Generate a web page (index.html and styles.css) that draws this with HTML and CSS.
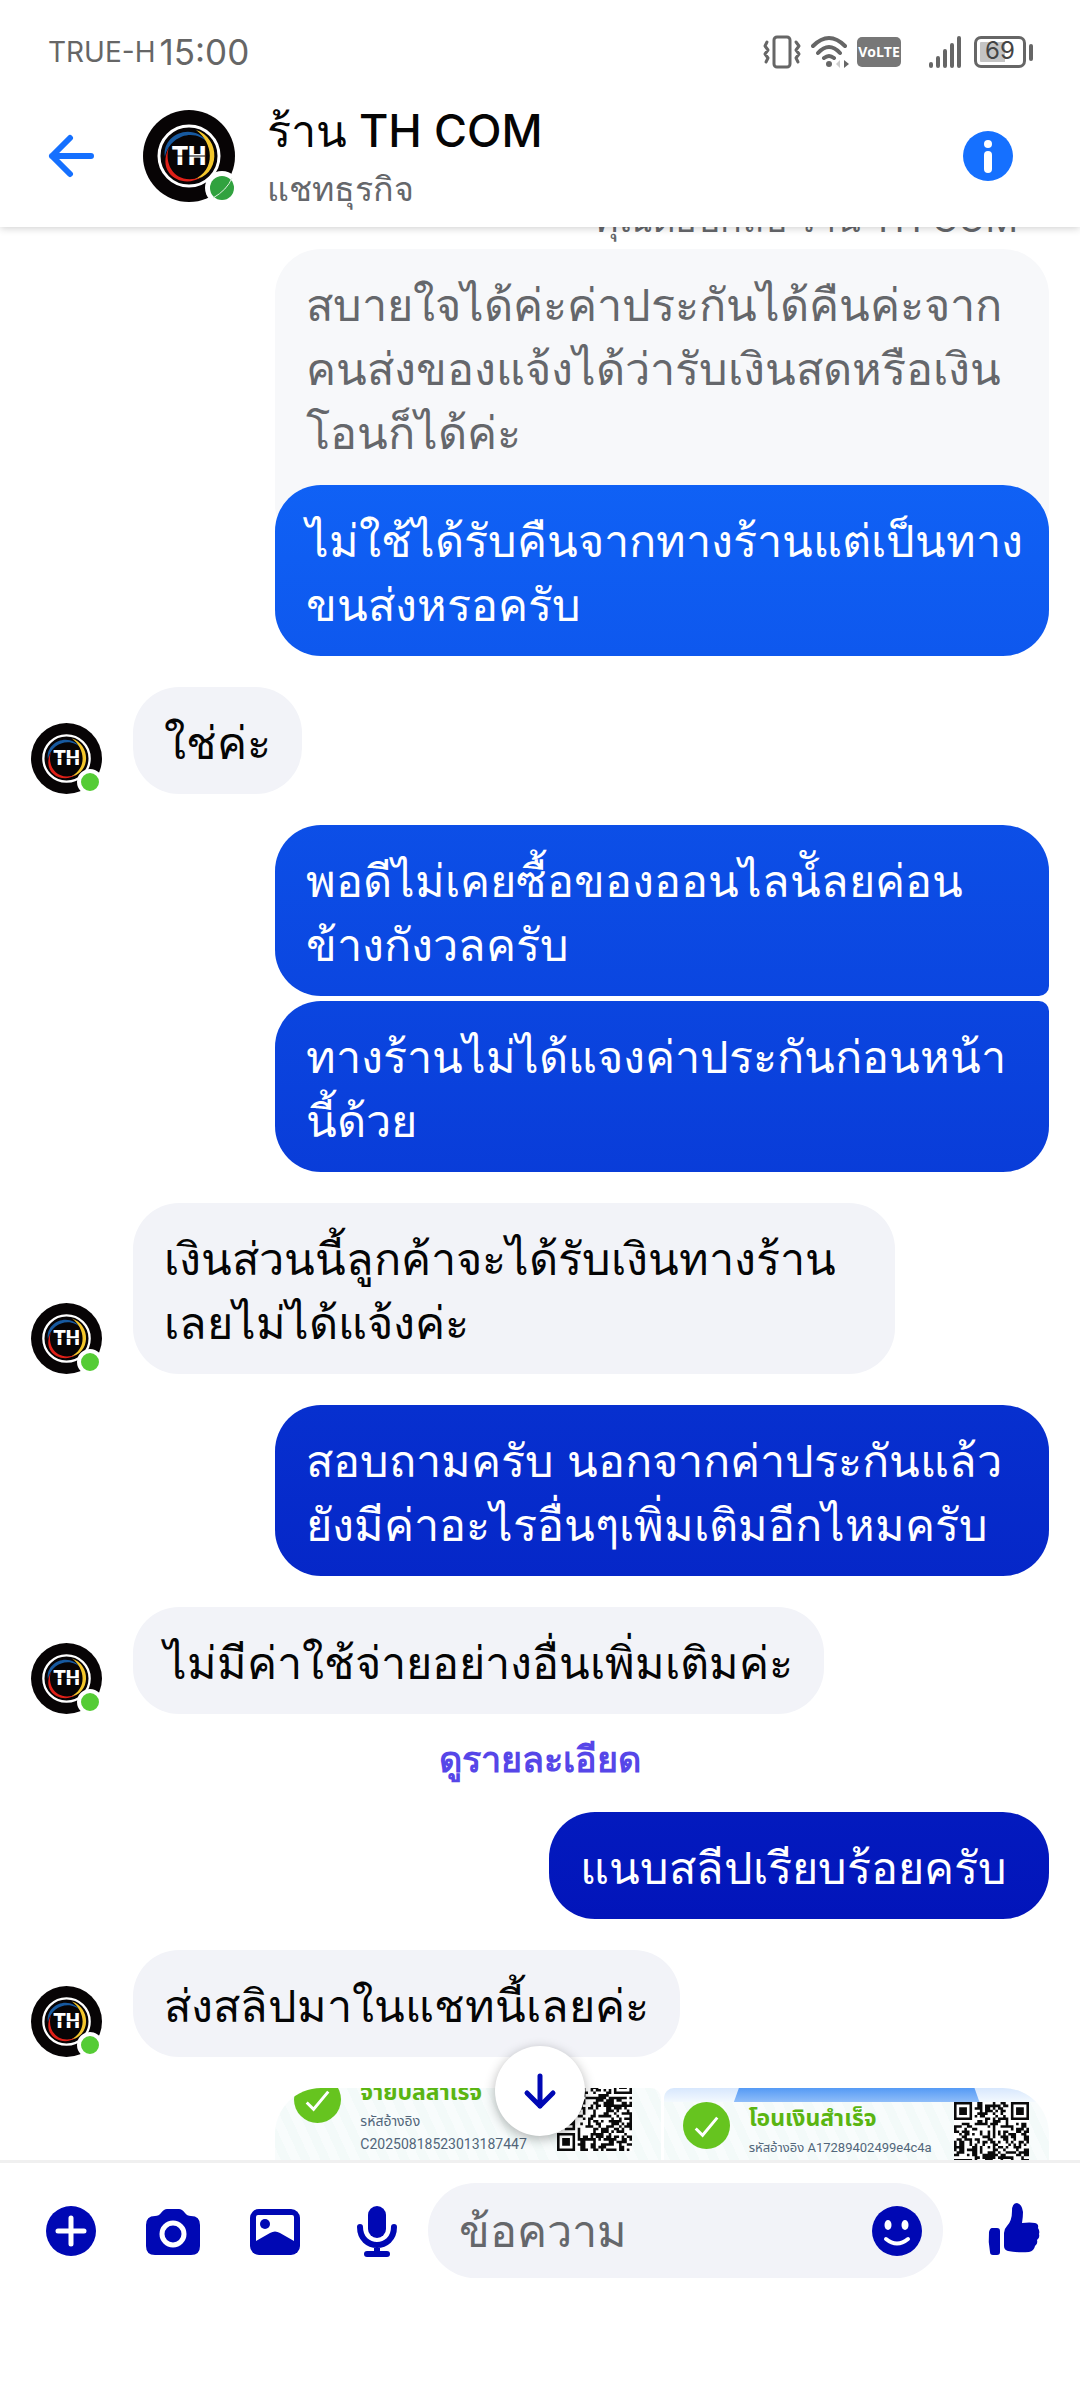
FILE: index.html
```html
<!DOCTYPE html>
<html lang="th">
<head>
<meta charset="utf-8">
<meta name="viewport" content="width=device-width, initial-scale=1">
<title>ร้าน TH COM</title>
<link rel="stylesheet" href="styles.css">
</head>
<body>
<svg class="defs" aria-hidden="true">
  <symbol id="logo" viewBox="0 0 92 92">
    <circle cx="46" cy="46" r="46" fill="#070405"/>
    <circle cx="46" cy="46" r="30" fill="none" stroke="#fff" stroke-width="3"/>
    <path d="M22 47C18 25 50 10 66 34C52 17 26 26 22 47Z" fill="#17599f"/>
    <path d="M53 20C78 28 78 66 50 70C74 60 70 32 53 20Z" fill="#f3c62c"/>
    <path d="M26 37C20 56 34 76 58 67C42 79 12 66 26 37Z" fill="#df2018"/>
    <text class="logo-text" x="46" y="55" text-anchor="middle">TH</text>
    <path d="M30 46h32" stroke="#070405" stroke-width="1"/>
  </symbol>
  <symbol id="tick" viewBox="0 0 48 48">
    <circle cx="24" cy="24" r="24" fill="#66c41f"/>
    <path d="M13 27l7 7L35 16" fill="none" stroke="#fff" stroke-width="3"/>
  </symbol>
</svg>

<header class="top">
  <div class="status">
    <span class="carrier">TRUE-H</span>
    <span class="clock">15:00</span>
    <svg class="st-vibrate" width="38" height="34" viewBox="0 0 38 34" fill="none" stroke="#666" stroke-width="3" stroke-linecap="round" stroke-linejoin="round"><rect x="11" y="2" width="16" height="30" rx="3"/><path d="M4 7L2 11l3 4-3 4 3 4-2 4M33 7l3 4-3 4 3 4-3 4 2 4"/></svg>
    <svg class="st-wifi" width="38" height="34" viewBox="0 0 38 34" fill="none" stroke="#666" stroke-width="4" stroke-linecap="round"><path d="M2 11Q18-5 34 11M7 18Q18 6 29 18M13 23Q18 19 23 23"/><circle cx="18" cy="29" r="3" fill="#666" stroke="none"/><path d="M29 25l-4 4 4 4z" fill="#ccc" stroke="none"/><path d="M33 25l5 4-5 4z" fill="#666" stroke="none"/></svg>
    <span class="volte">VoLTE</span>
    <svg class="st-signal" width="34" height="32" viewBox="0 0 34 32" stroke="#666" stroke-width="4" stroke-linecap="round"><path d="M3 28v2M10 22v8M17 15v15M24 9v21M31 2v28"/></svg>
    <span class="battery">69</span>
  </div>
  <div class="bar">
    <button class="icon back" aria-label="กลับ"><svg width="46" height="46" viewBox="0 0 46 46" fill="none" stroke="#1570ff" stroke-width="6" stroke-linecap="round" stroke-linejoin="round"><path d="M43 23H4M22 5L4 23l18 18"/></svg></button>
    <span class="avatar avatar-lg"><svg width="92" height="92"><use href="#logo"/></svg>
      <svg class="presence-lg" width="34" height="34" viewBox="0 0 34 34"><circle cx="17" cy="17" r="17" fill="#fff"/><circle cx="17" cy="17" r="12" fill="#31a23f"/><path d="M8 27Q22 19 27 7" fill="none" stroke="#dff0e0" stroke-width="1"/></svg>
    </span>
    <div class="who"><h1>ร้าน TH COM</h1><p>แชทธุรกิจ</p></div>
    <button class="icon" aria-label="ข้อมูล"><svg width="52" height="52" viewBox="0 0 52 52"><circle cx="26" cy="26" r="25" fill="#1570ff"/><circle cx="26" cy="14" r="4" fill="#fff"/><path d="M26 25v14" stroke="#fff" stroke-width="8" stroke-linecap="round"/></svg></button>
  </div>
</header>

<div class="pane">
<main class="chat">
  <p class="reply-label">คุณตอบกลับ ร้าน TH COM</p>
  <div class="bubble quote">สบายใจได้ค่ะค่าประกันได้คืนค่ะจาก<br>คนส่งของแจ้งได้ว่ารับเงินสดหรือเงิน<br>โอนก็ได้ค่ะ</div>
  <div class="bubble out wide reply">ไม่ใช้ได้รับคืนจากทางร้านแต่เป็นทาง<br>ขนส่งหรอครับ</div>

  <div class="in"><span class="avatar"><svg width="71" height="71"><use href="#logo"/></svg><i class="presence"></i></span><div class="bubble">ใช่ค่ะ</div></div>

  <div class="group">
    <div class="bubble out wide first">พอดีไม่เคยซื้อของออนไลน์ัลยค่อน<br>ข้างกังวลครับ</div>
    <div class="bubble out wide last">ทางร้านไม่ได้แจงค่าประกันก่อนหน้า<br>นี้ด้วย</div>
  </div>

  <div class="in"><span class="avatar"><svg width="71" height="71"><use href="#logo"/></svg><i class="presence"></i></span><div class="bubble wide-in">เงินส่วนนี้ลูกค้าจะได้รับเงินทางร้าน<br>เลยไม่ได้แจ้งค่ะ</div></div>

  <div class="bubble out wide">สอบถามครับ นอกจากค่าประกันแล้ว<br>ยังมีค่าอะไรอื่นๆเพิ่มเติมอีกไหมครับ</div>

  <div class="in"><span class="avatar"><svg width="71" height="71"><use href="#logo"/></svg><i class="presence"></i></span><div class="bubble">ไม่มีค่าใช้จ่ายอย่างอื่นเพิ่มเติมค่ะ</div></div>

  <a class="details" href="#">ดูรายละเอียด</a>

  <div class="bubble out short">แนบสลีปเรียบร้อยครับ</div>

  <div class="in"><span class="avatar"><svg width="71" height="71"><use href="#logo"/></svg><i class="presence"></i></span><div class="bubble">ส่งสลิปมาในแชทนี้เลยค่ะ</div></div>

  <div class="slips">
    <section class="slip slip-bill">
      <div class="slip-row">
        <svg width="47" height="47"><use href="#tick"/></svg>
        <div class="slip-text"><h2>จ่ายบิลสำเร็จ</h2><p>รหัสอ้างอิง</p><p>C20250818523013187447</p></div>
        <svg class="qr" width="75" height="75" viewBox="0 0 29 29" data-seed="7"></svg>
      </div>
    </section>
    <section class="slip slip-transfer">
      <svg class="ribbon" height="14" viewBox="0 0 386 14" preserveAspectRatio="none"><defs><linearGradient id="sky" x1="0" y1="0" x2="0" y2="1"><stop offset="0" stop-color="#559af5"/><stop offset="1" stop-color="#8fbdf9"/></linearGradient></defs><path d="M75 0H311L316 14H70Z" fill="url(#sky)"/></svg>
      <div class="slip-row">
        <svg width="47" height="47"><use href="#tick"/></svg>
        <div class="slip-text"><h2>โอนเงินสำเร็จ</h2><p>รหัสอ้างอิง A17289402499e4c4a</p></div>
        <svg class="qr" width="75" height="75" viewBox="0 0 29 29" data-seed="23"></svg>
      </div>
    </section>
  </div>
</main>
<button class="icon jump" aria-label="เลื่อนลง"><svg width="36" height="40" viewBox="0 0 36 40" fill="none" stroke="#0008b4" stroke-width="5" stroke-linecap="round" stroke-linejoin="round"><path d="M18 5v30M5 22l13 13 13-13"/></svg></button>
</div>

<form class="composer">
  <div class="tools">
    <button type="button" class="icon" aria-label="เพิ่ม"><svg width="56" height="56" viewBox="0 0 56 56"><circle cx="28" cy="28" r="25" fill="#0008b4"/><path d="M28 15v26M15 28h26" stroke="#fff" stroke-width="5" stroke-linecap="round"/></svg></button>
    <button type="button" class="icon" aria-label="กล้อง"><svg width="56" height="56" viewBox="0 0 56 56"><path d="M10 13Q14 13 16 10Q19 6 22 6H34Q37 6 40 10Q42 13 46 13Q55 13 55 22V43Q55 52 46 52H10Q1 52 1 43V22Q1 13 10 13Z" fill="#0008b4"/><circle cx="28" cy="31" r="11" fill="none" stroke="#fff" stroke-width="5"/></svg></button>
    <button type="button" class="icon" aria-label="รูปภาพ"><svg width="56" height="56" viewBox="0 0 56 56"><rect x="3" y="6" width="50" height="46" rx="9" fill="#0008b4"/><path d="M9 14Q9 12 11 12H45Q47 12 47 14V38L33 30Q28 27 23 30L9 38Z" fill="#fff"/><circle cx="18" cy="21" r="5" fill="#0008b4"/></svg></button>
    <button type="button" class="icon" aria-label="ไมโครโฟน"><svg width="56" height="56" viewBox="0 0 56 56"><rect x="19" y="3" width="18" height="32" rx="9" fill="#0008b4"/><path d="M11 24C11 48 45 48 45 24M28 42v8" fill="none" stroke="#0008b4" stroke-width="6" stroke-linecap="round"/><rect x="15" y="48" width="26" height="6" rx="3" fill="#0008b4"/></svg></button>
  </div>
  <div class="field">
    <input type="text" placeholder="ข้อความ" aria-label="ข้อความ">
    <button type="button" class="icon" aria-label="อีโมจิ"><svg width="52" height="52" viewBox="0 0 52 52"><circle cx="26" cy="26" r="25" fill="#0008b4"/><ellipse cx="17" cy="20" rx="3.5" ry="5" fill="#fff"/><ellipse cx="34" cy="20" rx="3.5" ry="5" fill="#fff"/><path d="M15 34Q26 43 37 34" fill="none" stroke="#fff" stroke-width="4" stroke-linecap="round"/></svg></button>
  </div>
  <button type="button" class="icon" aria-label="ถูกใจ"><svg width="56" height="56" viewBox="0 0 56 56" fill="#0008b4"><path d="M6 25H11Q14 25 14 28V49Q14 52 11 52H7Q4 52 4 49Q2 39 3 29Q4 25 6 25Z"/><path d="M18 30Q18 26 21 23Q26 18 26 8Q26 0 31 0Q36 1 37 9Q37 14 36 20Q44 19 49 20Q53 21 52 25Q54 28 53 31Q54 35 51 37Q52 41 49 43Q48 48 43 49Q32 50 22 48Q18 47 18 43Z"/></svg></button>
</form>
<script src="script.js"></script>
</body>
</html>
```
FILE: styles.css
```css
* { box-sizing: border-box; margin: 0; }

body {
  height: 100vh;
  display: flex;
  flex-direction: column;
  background: #fff;
  color: #050505;
  font-family: Inter, "Noto Sans", sans-serif;
  font-size: 45px;
}

.defs { position: absolute; width: 0; height: 0; }

.icon {
  flex: none;
  padding: 0;
  border: 0;
  background: none;
  display: flex;
  align-items: center;
  justify-content: center;
}

/* Header */
.top {
  position: relative;
  z-index: 1;
  height: 227px;
  background: #fff;
  box-shadow: 0 1px 8px rgba(0, 0, 0, 0.2);
}

.status {
  display: flex;
  align-items: center;
  height: 84px;
  padding: 20px 46px 0 48px;
  color: #666;
  line-height: 40px;
}
.carrier { font-size: 28px; margin-right: 4px; }
.clock { font-size: 35px; margin-right: auto; }
.st-vibrate { margin-right: 10px; }
.st-wifi { margin-right: 8px; }
.st-signal { margin-right: 12px; }
.volte {
  width: 44px;
  height: 30px;
  margin-right: 27px;
  border-radius: 5px;
  background: #777;
  color: #fff;
  font: bold 14px/30px "Open Sans", sans-serif;
  text-align: center;
}
.battery {
  position: relative;
  width: 52px;
  height: 32px;
  margin-right: 8px;
  border: 3px solid #666;
  border-radius: 7px;
  background: linear-gradient(90deg, #c4c4c4 60%, #fff 60%);
  box-shadow: inset 0 0 0 3px #fff;
  color: #444;
  font-size: 24px;
  line-height: 24px;
  text-align: center;
}
.battery::after {
  content: "";
  position: absolute;
  left: 52px;
  top: 5px;
  width: 4px;
  height: 17px;
  border-radius: 2px;
  background: #666;
}

.bar {
  display: flex;
  align-items: center;
  height: 143px;
  padding: 0 66px 0 48px;
}
.back { margin-right: 49px; }
.who { flex: 1; margin-left: 32px; padding-top: 4px; display: grid; gap: 6px; }
.who h1 { font-size: 45px; font-weight: 500; line-height: 56px; }
.who p { font-size: 34px; line-height: 48px; color: #65676b; }

.avatar { position: relative; flex: none; width: 71px; height: 71px; }
.avatar svg { display: block; }
.avatar-lg { width: 92px; height: 92px; }
.avatar .presence-lg { position: absolute; right: -4px; bottom: -3px; }
.presence {
  position: absolute;
  right: -1px;
  bottom: -1px;
  width: 26px;
  height: 26px;
  border: 4px solid #fff;
  border-radius: 50%;
  background: #55cc35;
}
.logo-text { font: 900 26px Roboto, sans-serif; fill: #fff; }

/* Conversation */
.pane { position: relative; flex: 1; min-height: 0; }
.chat {
  height: 100%;
  overflow: hidden;
  padding: 0 31px;
  display: flex;
  flex-direction: column;
  align-items: flex-end;
  gap: 31px;
}
.chat > * { flex: none; }
.reply-label {
  margin: -26px 31px -19px 0;
  font-size: 36px;
  line-height: 36px;
  color: #65676b;
}
.bubble {
  padding: 24px 31px 19px;
  border-radius: 46px;
  background: #f2f3f8;
  line-height: 64px;
  white-space: nowrap;
}
.quote {
  width: 76%;
  margin-bottom: -97px;
  padding-bottom: 86px;
  background: #f7f8fa;
  color: #65676b;
}
.out {
  color: #fff;
  background: linear-gradient(#126eff 10%, #0008b0 90%) fixed;
}
.wide { width: 76%; }
.wide-in { width: 762px; }
.short { min-width: 500px; }
.group {
  align-self: stretch;
  display: flex;
  flex-direction: column;
  align-items: flex-end;
  gap: 5px;
}
.first { border-bottom-right-radius: 10px; }
.last { border-top-right-radius: 10px; }
.in {
  align-self: flex-start;
  display: flex;
  align-items: flex-end;
  gap: 31px;
}
.details {
  align-self: center;
  padding-bottom: 8px;
  color: #5646e8;
  font-size: 36px;
  font-weight: bold;
  line-height: 28px;
  text-decoration: none;
}

.slips {
  width: 76%;
  height: 400px;
  display: grid;
  grid-template-columns: 1fr 1fr;
  gap: 3px;
}
.slip {
  position: relative;
  min-width: 0;
  overflow: hidden;
  background: repeating-linear-gradient(65deg, #f3faf9 0 9px, #f8fcfc 9px 18px);
}
.slip-bill { border-radius: 46px 10px 10px 46px; }
.slip-transfer { border-radius: 10px 46px 46px 10px; padding-top: 14px; }
.slip-bill .slip-row { margin-top: -12px; padding-right: 29px; }
.ribbon {
  position: absolute;
  left: 0;
  top: 0;
  width: 100%;
  background: linear-gradient(#d7e7fd, #f3f9fe);
}
.slip-row { display: flex; gap: 19px; padding: 0 20px 0 19px; }
.slip-row > svg { flex: none; }
.slip-text { flex: 1; min-width: 0; white-space: nowrap; color: #52667a; font-family: Roboto, "Noto Sans Thai", sans-serif; }
.slip-text h2 { color: #5ab512; font-size: 23px; line-height: 34px; }
.slip-text p { font-size: 14px; line-height: 23px; }
.slip-transfer p { font-size: 13px; }
.qr { background: #fff; }

.jump {
  position: absolute;
  left: calc(50% - 45px);
  bottom: 24px;
  width: 90px;
  height: 90px;
  border-radius: 50%;
  background: #fff;
  box-shadow: 0 3px 12px rgba(0, 0, 0, 0.3);
}

/* Composer */
.composer {
  display: flex;
  align-items: center;
  padding: 20px 38px 122px 43px;
  border-top: 3px solid #f0f0f0;
}
.tools { display: flex; gap: 46px; margin-right: 23px; }
.field {
  flex: 1;
  min-width: 0;
  display: flex;
  align-items: center;
  height: 95px;
  margin-right: 43px;
  padding: 0 20px 0 31px;
  border-radius: 48px;
  background: #f2f3f8;
}
.field input {
  flex: 1;
  min-width: 0;
  padding: 0;
  border: 0;
  background: none;
  font: inherit;
  line-height: 64px;
}
.field input::placeholder { color: #65676b; opacity: 1; }
```
FILE: script.js
```js
// Fills each QR code on the slips with its finder squares and modules.
document.querySelectorAll('.qr').forEach(function (svg) {
  var n = 29, seed = Number(svg.dataset.seed), d = '';
  function finder(x, y, ox, oy) {
    var i = x - ox, j = y - oy;
    if (i < -1 || j < -1 || i > 7 || j > 7) return null;
    var r = Math.max(Math.abs(i - 3), Math.abs(j - 3));
    return r === 3 || r < 2;
  }
  for (var y = 0; y < n; y++) {
    for (var x = 0; x < n; x++) {
      seed = (seed * 1103515245 + 12345) % 2147483648;
      var on = seed / 2147483648 > 0.48;
      [[0, 0], [n - 7, 0], [0, n - 7]].forEach(function (p) {
        var f = finder(x, y, p[0], p[1]);
        if (f !== null) on = f;
      });
      if (on) d += 'M' + x + ' ' + y + 'h1v1h-1z';
    }
  }
  var path = document.createElementNS('http://www.w3.org/2000/svg', 'path');
  path.setAttribute('d', d);
  path.setAttribute('fill', '#0a0a0a');
  svg.appendChild(path);
});
```
